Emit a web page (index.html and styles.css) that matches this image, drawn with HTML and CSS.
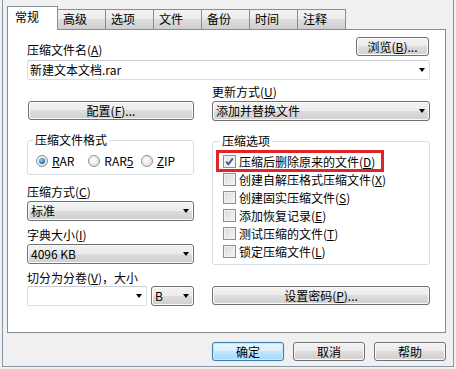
FILE: index.html
```html
<!DOCTYPE html>
<html lang="zh-CN">
<head>
<meta charset="utf-8">
<title>压缩文件名和参数</title>
<link rel="stylesheet" href="styles.css">
</head>
<body>
<div class="window">
  <div class="tabs">
    <div class="tab active">常规</div>
    <div class="tab">高级</div>
    <div class="tab">选项</div>
    <div class="tab">文件</div>
    <div class="tab">备份</div>
    <div class="tab">时间</div>
    <div class="tab">注释</div>
  </div>
  <div class="panel">
    <div class="row-top">
      <span class="label">压缩文件名(<u>A</u>)</span>
      <button class="btn btn-browse">浏览(<u>B</u>)...</button>
    </div>
    <div class="combo edit combo-name"><span class="combo-text">新建文本文档.rar</span><i class="arrow"></i></div>
    <div class="cols">
      <div class="col col-left">
        <button class="btn btn-config">配置(<u>F</u>)...</button>
        <fieldset class="group group-format">
          <legend>压缩文件格式</legend>
          <div class="radios">
            <label class="radio-item"><span class="radio checked"></span><span><u>R</u>AR</span></label>
            <label class="radio-item"><span class="radio"></span><span>RAR<u>5</u></span></label>
            <label class="radio-item"><span class="radio"></span><span><u>Z</u>IP</span></label>
          </div>
        </fieldset>
        <div class="label label-first">压缩方式(<u>C</u>)</div>
        <div class="combo list"><span class="combo-text">标准</span><i class="arrow"></i></div>
        <div class="label">字典大小(<u>I</u>)</div>
        <div class="combo list"><span class="combo-text">4096 KB</span><i class="arrow"></i></div>
        <div class="label">切分为分卷(<u>V</u>)，大小</div>
        <div class="volume-row">
          <div class="combo edit combo-volume"><span class="combo-text"></span><i class="arrow"></i></div>
          <div class="combo list combo-unit"><span class="combo-text">B</span><i class="arrow"></i></div>
        </div>
      </div>
      <div class="col col-right">
        <div class="label label-update">更新方式(<u>U</u>)</div>
        <div class="combo list combo-update"><span class="combo-text">添加并替换文件</span><i class="arrow"></i></div>
        <fieldset class="group group-options">
          <legend>压缩选项</legend>
          <div class="check-row highlighted"><span class="check checked"><svg viewBox="0 0 11 11" width="11" height="11"><path d="M2.2 5.6 L4.4 8.2 L8.8 2.4" fill="none" stroke="#3f5a8a" stroke-width="1.9"/></svg></span><span>压缩后删除原来的文件(<u>D</u>)</span><span class="mark"></span></div>
          <div class="check-row"><span class="check"></span><span>创建自解压格式压缩文件(<u>X</u>)</span></div>
          <div class="check-row"><span class="check"></span><span>创建固实压缩文件(<u>S</u>)</span></div>
          <div class="check-row"><span class="check"></span><span>添加恢复记录(<u>E</u>)</span></div>
          <div class="check-row"><span class="check"></span><span>测试压缩的文件(<u>T</u>)</span></div>
          <div class="check-row"><span class="check"></span><span>锁定压缩文件(<u>L</u>)</span></div>
        </fieldset>
        <button class="btn btn-password">设置密码(<u>P</u>)...</button>
      </div>
    </div>
  </div>
  <div class="footer">
    <button class="btn btn-default">确定</button>
    <button class="btn">取消</button>
    <button class="btn">帮助</button>
  </div>
</div>
</body>
</html>
```

FILE: styles.css
```css
* { box-sizing: border-box; }

html, body {
  margin: 0;
  padding: 0;
  background: #f0f0f0;
}

body {
  font-family: "Noto Sans CJK SC", "Noto Sans", sans-serif;
  font-size: 12px;
  color: #000;
}

u { text-decoration: underline; text-underline-offset: 1px; }

.window {
  margin-left: 2px;
  width: 452px;
  height: 367px;
  border: 1px solid #8896a4;
  border-top: none;
  background: #f0f0f0;
  padding: 6px 7px 0 4px;
}

/* Tabs */
.tabs {
  display: flex;
  align-items: flex-end;
  height: 24px;
  margin-bottom: -1px;
  position: relative;
  z-index: 1;
}

.tab {
  width: 49px;
  height: 20px;
  margin-bottom: 1px;
  margin-left: -1px;
  border: 1px solid #898c95;
  border-bottom: none;
  background: linear-gradient(#f3f3f3, #ebebeb 50%, #dddddd 50%, #cfcfcf);
  padding-left: 5px;
  line-height: 18px;
}

.tab.active {
  width: 51px;
  height: 24px;
  margin-bottom: 0;
  margin-left: 0;
  background: #fff;
  padding-left: 7px;
  line-height: 19px;
  position: relative;
  z-index: 2;
}

/* Panel */
.panel {
  width: 439px;
  height: 304px;
  border: 1px solid #898c95;
  background: #fff;
  padding: 6px 15px 0 19px;
}

.row-top {
  display: flex;
  justify-content: space-between;
  align-items: flex-end;
  height: 20px;
}

.label {
  line-height: 14px;
  white-space: nowrap;
}

.row-top .label { line-height: 14px; margin-bottom: -1px; }

/* Buttons */
.btn {
  display: block;
  height: 19px;
  padding: 0;
  border: 1px solid #707070;
  border-radius: 3px;
  background: linear-gradient(#f2f2f2, #ebebeb 50%, #dddddd 50%, #cfcfcf);
  box-shadow: inset 0 0 0 1px #fbfbfb;
  font: inherit;
  line-height: 16px;
  color: #000;
  text-align: center;
}

.btn-browse { width: 73px; margin-right: 1px; }
.btn-config { width: 166px; margin-left: 1px; margin-top: 16px; }
.btn-password { width: 218px; margin-top: auto; margin-bottom: 1px; }

.btn-default {
  border-color: #3c7fb1;
  background: linear-gradient(#eaf6fd, #d9f0fc 50%, #bee6fd 50%, #a7d9f5);
  box-shadow: inset 0 0 0 1px #c6e8fb, 0 0 1px #7ec4ea;
}

/* Combos */
.combo {
  position: relative;
  height: 20px;
  margin-top: 2px;
  display: flex;
  align-items: center;
}

.combo-text {
  flex: 1;
  white-space: nowrap;
  overflow: hidden;
  line-height: 16px;
}

.combo.edit {
  background: #fff;
  border: 1px solid #dadde2;
  border-top-color: #c9ccd2;
  border-radius: 2px;
  padding-left: 2px;
}

.combo.list {
  border: 1px solid #707070;
  border-radius: 3px;
  background: linear-gradient(#f2f2f2, #ebebeb 50%, #dddddd 50%, #cfcfcf);
  box-shadow: inset 0 0 0 1px #fbfbfb;
  padding-left: 3px;
}

.arrow {
  width: 0;
  height: 0;
  border-left: 3.5px solid transparent;
  border-right: 3.5px solid transparent;
  border-top: 4px solid #000;
  margin-right: 4px;
  flex: none;
}

.combo-name { margin-top: 4px; width: 403px; }

.cols {
  display: flex;
  gap: 18px;
  margin-top: 5px;
}

.col {
  display: flex;
  flex-direction: column;
}

.col-left { width: 167px; }
.col-right { width: 218px; }

.combo-update { margin-top: 2px; padding-left: 2px; }

/* Group boxes */
.group {
  margin: 13px 0 0 0;
  border: 1px solid #d5dfe5;
  border-radius: 3px;
  min-width: 0;
}

.group legend {
  padding: 0 2px;
  margin-left: -3px;
  line-height: 14px;
}

.group-format {
  padding: 6px 0 6px 8px;
}

.radios {
  display: flex;
  line-height: 15px;
}

.radio-item {
  width: 54px;
  display: flex;
  align-items: center;
  gap: 4px;
}

.radio {
  width: 12px;
  height: 12px;
  border-radius: 50%;
  border: 1px solid #8e8f8f;
  background: radial-gradient(circle at 40% 40%, #ffffff, #e6e6e6 60%, #cfcfcf);
  position: relative;
  flex: none;
}

.radio.checked::after {
  content: "";
  position: absolute;
  left: 2px;
  top: 2px;
  width: 6px;
  height: 6px;
  border-radius: 50%;
  background: radial-gradient(circle at 40% 35%, #8fd0f5, #2f78b8 60%, #1b4f86);
}

.label-first { margin-top: 10px; }
.col-left .label { margin-top: 7px; }
.col-left .label.label-first { margin-top: 10px; }
.col-left .combo { margin-top: 2px; }

.volume-row {
  display: flex;
  gap: 4px;
  margin-top: 1px;
}

.volume-row .combo { margin-top: 0; }
.combo-volume { width: 120px; }
.combo-unit { width: 43px; }

.label-update { margin-top: 0; }

.group-options {
  padding: 4px 0 4px 10px;
}

.check-row {
  position: relative;
  display: flex;
  align-items: center;
  gap: 3px;
  height: 18px;
  white-space: nowrap;
}

.check {
  width: 13px;
  height: 13px;
  border: 1px solid #8e8f8f;
  background: linear-gradient(135deg, #d8d8d8, #f7f7f7);
  box-shadow: inset 0 0 0 1px #f2f2f2;
  display: flex;
  align-items: center;
  justify-content: center;
  flex: none;
}

.check.checked {
  background: linear-gradient(135deg, #e0e4ea, #fbfbfb);
}

.highlighted .mark {
  position: absolute;
  left: -7px;
  top: -2px;
  width: 168px;
  height: 22px;
  border: 3px solid #e0242a;
}

/* Footer */
.footer {
  display: flex;
  justify-content: flex-end;
  gap: 9px;
  margin-top: 9px;
}

.footer .btn { width: 72px; }
```
